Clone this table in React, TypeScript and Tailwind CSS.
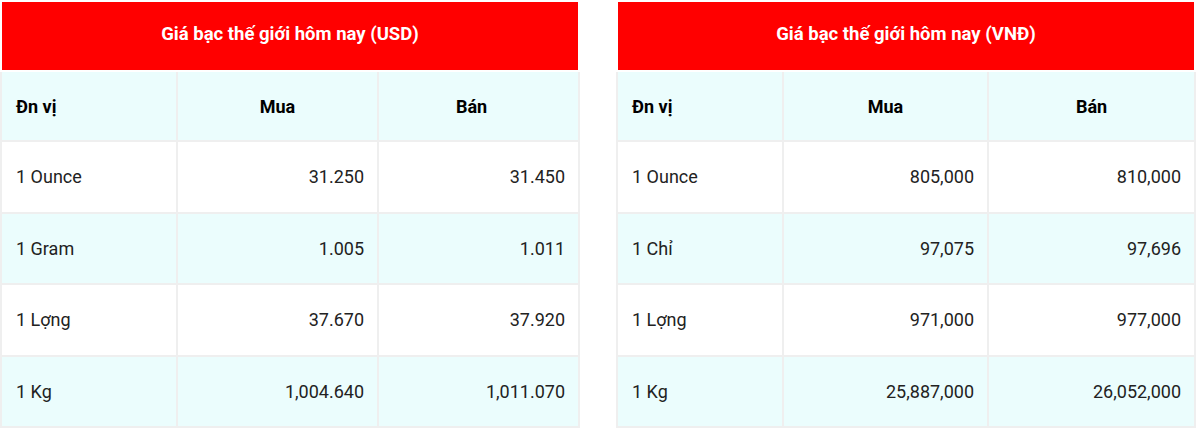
import React from "react";

type Row = [string, string, string];

const usd: Row[] = [
  ["1 Ounce", "31.250", "31.450"],
  ["1 Gram", "1.005", "1.011"],
  ["1 Lợng", "37.670", "37.920"],
  ["1 Kg", "1,004.640", "1,011.070"],
];
const vnd: Row[] = [
  ["1 Ounce", "805,000", "810,000"],
  ["1 Chỉ", "97,075", "97,696"],
  ["1 Lợng", "971,000", "977,000"],
  ["1 Kg", "25,887,000", "26,052,000"],
];

function PriceTable({ title, rows, cols, banPad }: { title: string; rows: Row[]; cols: [string, string, string]; banPad: string }) {
  return (
    <table className="w-[578px] border-collapse table-fixed text-[18px] text-[#222]">
      <colgroup>
        <col className={cols[0]} />
        <col className={cols[1]} />
        <col className={cols[2]} />
      </colgroup>
      <thead>
        <tr>
          <th colSpan={3} className="h-[70px] pb-[3px] bg-[#ff0000] text-white text-[18.5px] font-bold text-center border-2 border-white">
            {title}
          </th>
        </tr>
        <tr className="bg-[#ebfdfd]">
          <th className="h-[70px] text-left pl-[14px] font-bold text-black border-2 border-[#efefef]">Đn vị</th>
          <th className="h-[70px] text-center font-bold text-black border-2 border-[#efefef]">Mua</th>
          <th className={`h-[70px] text-center font-bold text-black border-2 border-[#efefef] ${banPad}`}>Bán</th>
        </tr>
      </thead>
      <tbody>
        {rows.map((r, i) => (
          <tr key={i} className={i % 2 === 1 ? "bg-[#ebfdfd]" : "bg-white"}>
            <td className="h-[70px] pl-[14px] border-2 border-[#efefef]">{r[0]}</td>
            <td className="h-[70px] text-right pr-[13px] border-2 border-[#efefef]">{r[1]}</td>
            <td className="h-[70px] text-right pr-[13px] border-2 border-[#efefef]">{r[2]}</td>
          </tr>
        ))}
      </tbody>
    </table>
  );
}

export default function App() {
  return (
    <div className="w-[1200px] h-[428px] bg-white flex gap-[36px]" style={{ fontFamily: "Roboto, 'Noto Sans', sans-serif" }}>
      <PriceTable title="Giá bạc thế giới hôm nay (USD)" rows={usd} cols={["w-[176px]", "w-[201px]", "w-[201px]"]} banPad="pr-[14px]" />
      <PriceTable title="Giá bạc thế giới hôm nay (VNĐ)" rows={vnd} cols={["w-[166px]", "w-[205px]", "w-[207px]"]} banPad="" />
    </div>
  );
}
